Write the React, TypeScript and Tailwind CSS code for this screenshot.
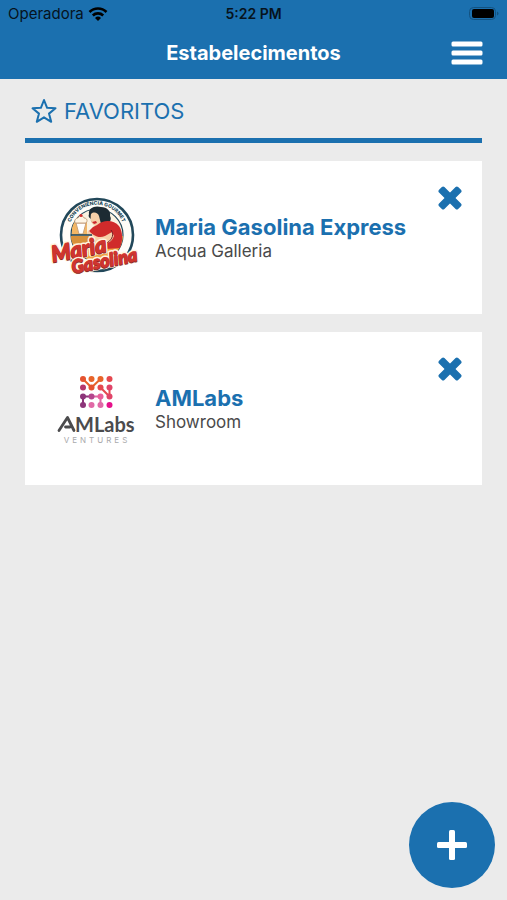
import type { ReactNode } from "react";

const MariaGasolinaLogo = () => (
  <svg viewBox="6 2 90 90" className="w-full h-full overflow-visible" role="img" aria-label="Maria Gasolina">
    <defs>
      <path id="maria-arc" d="M24 47 A28 28 0 1 1 79 47" />
      <clipPath id="maria-disc">
        <circle cx="52" cy="44" r="26" />
      </clipPath>
    </defs>
    {/* Badge rings */}
    <circle cx="52" cy="44" r="36" fill="#fffdf8" stroke="#22485a" strokeWidth="2.6" />
    <circle cx="52" cy="44" r="26" fill="#fbf3e2" stroke="#22485a" strokeWidth="1.2" />
    <g clipPath="url(#maria-disc)">
      <rect x="24" y="45" width="56" height="26" fill="#efa544" />
      <path d="M26 45h26l4 7H26z" fill="#d8913a" />
      <path d="M27 30h15v14H27z" fill="#f3b765" />
    </g>
    <text fontFamily="Inter, sans-serif" fontWeight="800" fontSize="5" fill="#22485a">
      <textPath href="#maria-arc" startOffset="50%" textAnchor="middle">
        CONVENIÊNCIA GOURMET
      </textPath>
    </text>
    {/* Woman in red */}
    <path
      d="M44 23c-1-6 6-9 12-7 6 0 10 4 9 9 2 3 0 7-3 7l-9 1c-4 1-8-2-7-5-2-1-3-3-2-5z"
      fill="#1d2b33"
    />
    <path d="M46 23c3-3 7-1 8 2l2 8-6 2c-4-2-5-7-4-12z" fill="#f6cfa8" />
    <path d="M47 31l4-1 1 2-3 1z" fill="#c9252c" />
    <path d="M52 34c7-6 17-5 22 1 4 6 4 14 1 22l-14 1-9-5-8-13 4-4z" fill="#d02b2b" />
    <path d="M43 39c5 5 10 9 17 6l7-4 2 4c-2 6-8 9-14 8-6-2-10-5-13-10z" fill="#f6cfa8" />
    <path d="M66 39c3 4 2 9-4 13" fill="none" stroke="#741b22" strokeWidth="1" />
    {/* Milkshake on a tray */}
    <path d="M31 32h10l-3 11h-4z" fill="#fff" stroke="#c9a27b" strokeWidth="1" />
    <path d="M30 32c-1-3 1-5 3-5 1-3 5-3 6 0 3 0 4 3 2 5z" fill="#fff6e6" stroke="#b9906b" strokeWidth="0.8" />
    <circle cx="36" cy="24.5" r="1.6" fill="#d33030" />
    <path d="M26 44h21" stroke="#22485a" strokeWidth="1.6" />
    {/* Lettering: cream halo behind, heavy red on top */}
    <g
      fontFamily="Lato, sans-serif"
      fontStyle="italic"
      fontWeight="900"
      fill="#cf352e"
      stroke="#cf352e"
      strokeWidth="1"
      strokeLinejoin="round"
    >
      <g transform="rotate(-11 8 72)">
        <text x="8" y="71" fontSize="22" stroke="#fff3df" strokeWidth="4">Maria</text>
        <text x="8" y="72" fontSize="22" fill="#8a2a26" stroke="#8a2a26">Maria</text>
        <text x="8" y="71" fontSize="22">Maria</text>
      </g>
      <g transform="rotate(-11 29 83)">
        <text x="28" y="82" fontSize="18" stroke="#fff3df" strokeWidth="4">Gasolina</text>
        <text x="28" y="83" fontSize="18" fill="#8a2a26" stroke="#8a2a26">Gasolina</text>
        <text x="28" y="82" fontSize="18">Gasolina</text>
      </g>
    </g>
  </svg>
);

const amlabsDots = [
  { x: 33, y: 13, color: "#e5532f" },
  { x: 41.5, y: 13, color: "#e8642a" },
  { x: 50.5, y: 13, color: "#e8642a" },
  { x: 59.5, y: 13, color: "#e5484f" },
  { x: 33, y: 21.5, color: "#b5386c" },
  { x: 41.5, y: 21.5, color: "#e5532f" },
  { x: 50.5, y: 21.5, color: "#e5484f" },
  { x: 59.5, y: 21.5, color: "#e04468" },
  { x: 33, y: 30.5, color: "#8d3579" },
  { x: 41.5, y: 30.5, color: "#b5468d" },
  { x: 50.5, y: 30.5, color: "#e8609a" },
  { x: 59.5, y: 30.5, color: "#e04468" },
  { x: 33, y: 39, color: "#8d3579" },
  { x: 41.5, y: 39, color: "#e069a6" },
  { x: 50.5, y: 39, color: "#e069a6" },
  { x: 59.5, y: 39, color: "#e5108a" },
];

const AMLabsLogo = () => (
  <svg viewBox="1 -2 90 90" className="w-full h-full" role="img" aria-label="AMLabs Ventures">
    <g fill="none" strokeWidth="2" strokeLinecap="round">
      <path d="M33 13l8.500 8.500l9-8.500" stroke="#e8642a" />
      <path d="M50.500 21.500l9 9v-9" stroke="#e5484f" />
      <path d="M33 39v-8.500h8.500" stroke="#8d3579" />
      <path d="M41.500 30.500h9V39" stroke="#e069a6" />
    </g>
    {amlabsDots.map((dot) => (
      <circle key={`${dot.x}-${dot.y}`} cx={dot.x} cy={dot.y} r="3" fill={dot.color} />
    ))}
    {/* The A has no full crossbar, only a short inner stroke */}
    <path
      d="M9 64.500L17.500 51.500L24 64.500M15.500 61h4.500"
      fill="none"
      stroke="#4b4b4d"
      strokeWidth="2.8"
      strokeLinecap="round"
      strokeLinejoin="round"
    />
    <text x="25" y="66" fontFamily="Lato, sans-serif" fontWeight="700" fontSize="20" fill="#4b4b4d">
      MLabs
    </text>
    <text x="47" y="77" textAnchor="middle" fontFamily="Inter, sans-serif" fontSize="8" letterSpacing="3" fill="#a9a9ab">
      VENTURES
    </text>
  </svg>
);

type Establishment = {
  name: string;
  place: string;
  logo: ReactNode;
};

const favorites: Establishment[] = [
  { name: "Maria Gasolina Express", place: "Acqua Galleria", logo: <MariaGasolinaLogo /> },
  { name: "AMLabs", place: "Showroom", logo: <AMLabsLogo /> },
];

const StatusBar = () => (
  <div className="grid grid-cols-3 items-center h-7 px-2 text-sm text-[#06131d]">
    <div className="flex items-center gap-1 text-[15px]">
      <span>Operadora</span>
      <svg viewBox="0 0 20 15" className="w-5 h-4" fill="none" stroke="#000" strokeWidth="2.600">
        <path d="M1.500 5.500a12 12 0 0 1 17 0" />
        <path d="M4.800 9a7.500 7.500 0 0 1 10.400 0" />
        <path d="M10 14.500l-3-3a4.300 4.300 0 0 1 6 0z" fill="#000" stroke="none" />
      </svg>
    </div>
    <span className="text-center font-semibold">5:22 PM</span>
    <svg viewBox="0 0 30 14" className="w-[30px] h-[14px] justify-self-end">
      <rect x="0.5" y="0.5" width="26" height="12" rx="4" fill="none" stroke="#135280" />
      <rect x="3" y="2" width="22" height="9" rx="2" fill="#000" />
      <path d="M28 4.500v4q1.500-.5 1.500-2t-1.500-2z" fill="#135280" />
    </svg>
  </div>
);

const Header = () => (
  <header className="bg-[#1b70af]">
    <StatusBar />
    <div className="grid grid-cols-[1fr_auto_1fr] items-center h-[51px] px-6 pb-[2px]">
      <h1 className="col-start-2 text-xl font-bold text-white">Estabelecimentos</h1>
      <button type="button" aria-label="Menu" className="justify-self-end">
        <svg viewBox="0 0 32 24" className="w-8 h-6" fill="#fff">
          <rect x="0.5" y="0.5" width="31" height="5" rx="1.500" />
          <rect x="0.5" y="9.500" width="31" height="5" rx="1.500" />
          <rect x="0.5" y="18.500" width="31" height="5" rx="1.500" />
        </svg>
      </button>
    </div>
  </header>
);

const EstablishmentCard = ({ name, place, logo }: Establishment) => (
  <li className="relative flex items-center gap-[14px] h-[153px] pl-[26px] pr-5 bg-white">
    <div className="w-[90px] h-[90px] shrink-0">{logo}</div>
    <div className="pt-[2px]">
      <h3 className="text-[22px] leading-6 font-bold text-[#1b70af]">{name}</h3>
      <p className="text-[17px] leading-6 text-[#4a4a4a]">{place}</p>
    </div>
    <button type="button" aria-label={`Remover ${name}`} className="absolute top-[25px] right-5">
      <svg viewBox="0 0 24 24" className="w-6 h-6" fill="#1b70af">
        <rect x="-1.500" y="8.200" width="27" height="7.600" rx="1.800" transform="rotate(45 12 12)" />
        <rect x="-1.500" y="8.200" width="27" height="7.600" rx="1.800" transform="rotate(-45 12 12)" />
      </svg>
    </button>
  </li>
);

const App = () => {
  return (
    <div className="min-h-screen bg-[#ebebeb] font-['Inter',sans-serif]">
      <Header />
      <main className="px-[25px] pt-4">
        <h2 className="flex items-center gap-[7px] pl-[6px] pb-[11px] border-b-5 border-[#1b70af] text-[22px] leading-8 text-[#1b70af]">
          <svg viewBox="0 0 26 26" className="w-[26px] h-[26px]" fill="none" stroke="#1b70af" strokeWidth="2">
            <path
              d="M13 2l3.100 7.800 8.400.5-6.500 5.300 2.200 8.200L13 19.300l-7.200 4.500L8 15.600 1.500 10.300l8.400-.5z"
              strokeLinejoin="round"
            />
          </svg>
          FAVORITOS
        </h2>
        <ul className="flex flex-col gap-[18px] mt-[18px]">
          {favorites.map((item) => (
            <EstablishmentCard key={item.name} {...item} />
          ))}
        </ul>
      </main>
      <button
        type="button"
        aria-label="Adicionar estabelecimento"
        className="fixed bottom-3 right-3 flex items-center justify-center w-[86px] h-[86px] rounded-full bg-[#1b70af]"
      >
        <svg viewBox="0 0 30 30" className="w-[30px] h-[30px]" fill="#fff">
          <rect x="0" y="12" width="30" height="6" rx="1.500" />
          <rect x="12" y="0" width="6" height="30" rx="1.500" />
        </svg>
      </button>
    </div>
  );
};

export default App;
